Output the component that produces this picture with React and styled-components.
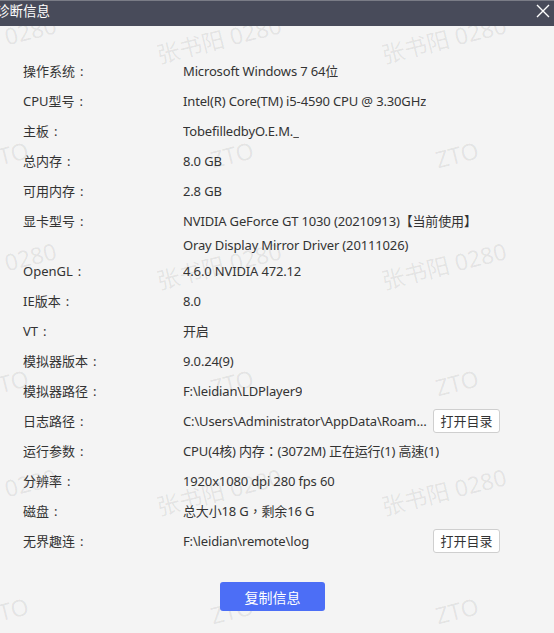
import React from "react";
import styled, { createGlobalStyle } from "styled-components";

const GlobalStyle = createGlobalStyle`
  html, body {
    margin: 0;
    padding: 0;
    background: #f4f4f4;
  }
  * {
    box-sizing: border-box;
  }
`;

const rows = [
  { label: "操作系统", value: "Microsoft Windows 7 64位" },
  { label: "CPU型号", value: "Intel(R) Core(TM) i5-4590 CPU @ 3.30GHz" },
  { label: "主板", value: "TobefilledbyO.E.M._" },
  { label: "总内存", value: "8.0 GB" },
  { label: "可用内存", value: "2.8 GB" },
  {
    label: "显卡型号",
    value: "NVIDIA GeForce GT 1030 (20210913)【当前使用】",
    extra: "Oray Display Mirror Driver (20111026)"
  },
  { label: "OpenGL", value: "4.6.0 NVIDIA 472.12" },
  { label: "IE版本", value: "8.0" },
  { label: "VT", value: "开启" },
  { label: "模拟器版本", value: "9.0.24(9)" },
  { label: "模拟器路径", value: "F:\\leidian\\LDPlayer9" },
  {
    label: "日志路径",
    value: "C:\\Users\\Administrator\\AppData\\Roaming\\leidian9\\log",
    button: true
  },
  { label: "运行参数", value: "CPU(4核) 内存：(3072M) 正在运行(1) 高速(1)" },
  { label: "分辨率", value: "1920x1080 dpi 280 fps 60" },
  { label: "磁盘", value: "总大小18 G，剩余16 G" },
  { label: "无界趣连", value: "F:\\leidian\\remote\\log", button: true }
];

export default function App() {
  const marks = [];
  for (let r = 0; r < 3; r++) {
    for (let c = 0; c < 3; c++) {
      marks.push(
        <Mark key={`n${r}${c}`} style={{ left: c * 225 - 6, top: r * 226 + 40 }}>
          张书阳 0280
        </Mark>
      );
      marks.push(
        <Mark key={`z${r}${c}`} style={{ left: c * 225 + 7, top: r * 228 + 155 }}>
          ZTO
        </Mark>
      );
    }
  }

  return (
    <Window>
      <GlobalStyle />
      <Watermarks>{marks}</Watermarks>
      <TitleBar>
        <Title>诊断信息</Title>
        <CloseButton aria-label="close">
          <svg width="14" height="14" viewBox="0 0 14 14">
            <path d="M1 1 L13 13 M13 1 L1 13" stroke="#fff" strokeWidth="1.4" />
          </svg>
        </CloseButton>
      </TitleBar>
      <InfoList>
        {rows.map((row) => (
          <Row key={row.label}>
            <Label>
              {row.label}
              <Colon>:</Colon>
            </Label>
            <ValueCell>
              <ValueLine>
                <ValueText $fixed={row.button}>{row.value}</ValueText>
                {row.button && <SmallButton>打开目录</SmallButton>}
              </ValueLine>
              {row.extra && <SubLine>{row.extra}</SubLine>}
            </ValueCell>
          </Row>
        ))}
      </InfoList>
      <Footer>
        <PrimaryButton>复制信息</PrimaryButton>
      </Footer>
    </Window>
  );
}

const Window = styled.div`
  position: relative;
  width: 554px;
  height: 633px;
  overflow: hidden;
  background: #f4f4f4;
  font-family: "Noto Sans", "Noto Sans CJK SC", sans-serif;
  font-size: 13px;
  color: #333;
`;

const Watermarks = styled.div`
  position: absolute;
  inset: 0;
  pointer-events: none;
`;

const Mark = styled.span`
  position: absolute;
  font-family: "Noto Sans", "Noto Sans CJK SC", sans-serif;
  font-size: 23px;
  line-height: 1;
  color: rgba(0, 0, 0, 0.075);
  white-space: nowrap;
  transform: translate(-50%, -50%) rotate(-14deg);
`;

const TitleBar = styled.div`
  position: relative;
  height: 26px;
  display: flex;
  align-items: center;
  justify-content: space-between;
  background: #484b5a;
  border-top: 1px solid #7a7c86;
  padding: 0 4px 0 0;
`;

const Title = styled.div`
  margin-left: -4px;
  color: #fff;
  font-family: "Noto Sans CJK SC", sans-serif;
  font-size: 13.5px;
  line-height: 20px;
  margin-top: -7px;
`;

const CloseButton = styled.div`
  display: flex;
  margin-top: -6px;
`;

const InfoList = styled.div`
  position: relative;
  padding: 30px 0 0 23px;
`;

const Row = styled.div`
  display: grid;
  grid-template-columns: 160px 1fr;
  padding: 3px 0;
  line-height: 24px;
`;

const Label = styled.div`
  white-space: nowrap;
  font-family: "Noto Sans", "Noto Sans CJK SC", sans-serif;
`;

const Colon = styled.span`
  padding-left: 5px;
`;

const ValueCell = styled.div`
  display: flex;
  flex-direction: column;
  font-family: "Noto Sans", "Noto Sans CJK TC", sans-serif;
  letter-spacing: -0.15px;
`;

const ValueLine = styled.div`
  display: flex;
  align-items: center;
  gap: 4px;
`;

const ValueText = styled.span`
  white-space: nowrap;
  overflow: hidden;
  text-overflow: ellipsis;
  width: ${(p) => (p.$fixed ? "246px" : "auto")};
`;

const SubLine = styled.div`
  margin-bottom: -4px;
`;

const SmallButton = styled.button`
  width: 67px;
  height: 24px;
  padding: 0;
  background: #fff;
  border: 1px solid #cfcfcf;
  border-radius: 3px;
  font-family: "Noto Sans CJK SC", sans-serif;
  font-size: 13px;
  color: #333;
  line-height: 22px;
  letter-spacing: 0;
`;

const Footer = styled.div`
  position: relative;
  display: flex;
  justify-content: center;
  padding: 26px 9px 0 0;
`;

const PrimaryButton = styled.button`
  width: 105px;
  height: 29px;
  background: #4c6ef6;
  color: #fff;
  border: none;
  border-radius: 3px;
  font-family: "Noto Sans CJK SC", sans-serif;
  font-size: 14px;
`;
